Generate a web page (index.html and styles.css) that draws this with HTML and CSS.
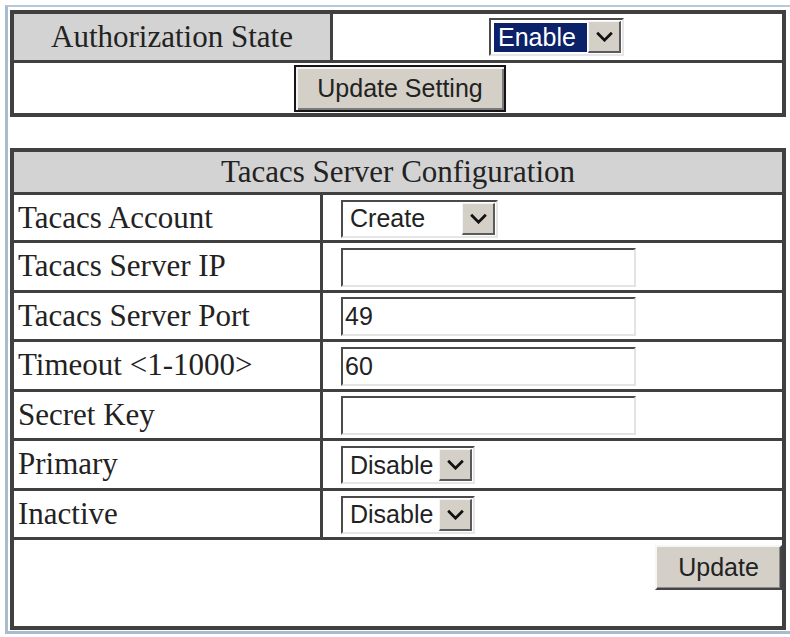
FILE: index.html
```html
<!DOCTYPE html>
<html lang="en">
<head>
<meta charset="utf-8">
<title>Tacacs Server Configuration</title>
<link rel="stylesheet" href="styles.css">
</head>
<body>
<div class="frame">
  <section class="panel auth">
    <div class="auth-row">
      <div class="auth-label">Authorization State</div>
      <div class="auth-value">
        <span class="select select-enable">
          <span class="select-text selected">Enable</span>
          <span class="select-arrow"><svg viewBox="0 0 20 12" width="19" height="11"><path d="M2 2 L10 10 L18 2" fill="none" stroke="#111" stroke-width="3"/></svg></span>
        </span>
      </div>
    </div>
    <div class="auth-action">
      <button class="btn btn-default" type="button">Update Setting</button>
    </div>
  </section>

  <section class="panel tacacs">
    <div class="tac-head">Tacacs Server Configuration</div>
    <div class="tac-row first">
      <div class="tac-label">Tacacs Account</div>
      <div class="tac-value">
        <span class="select select-create">
          <span class="select-text">Create</span>
          <span class="select-arrow"><svg viewBox="0 0 20 12" width="19" height="11"><path d="M2 2 L10 10 L18 2" fill="none" stroke="#111" stroke-width="3"/></svg></span>
        </span>
      </div>
    </div>
    <div class="tac-row">
      <div class="tac-label">Tacacs Server IP</div>
      <div class="tac-value"><span class="field"></span></div>
    </div>
    <div class="tac-row">
      <div class="tac-label">Tacacs Server Port</div>
      <div class="tac-value"><span class="field">49</span></div>
    </div>
    <div class="tac-row">
      <div class="tac-label">Timeout &lt;1-1000&gt;</div>
      <div class="tac-value"><span class="field">60</span></div>
    </div>
    <div class="tac-row">
      <div class="tac-label">Secret Key</div>
      <div class="tac-value"><span class="field"></span></div>
    </div>
    <div class="tac-row">
      <div class="tac-label">Primary</div>
      <div class="tac-value">
        <span class="select select-disable">
          <span class="select-text">Disable</span>
          <span class="select-arrow"><svg viewBox="0 0 20 12" width="19" height="11"><path d="M2 2 L10 10 L18 2" fill="none" stroke="#111" stroke-width="3"/></svg></span>
        </span>
      </div>
    </div>
    <div class="tac-row">
      <div class="tac-label">Inactive</div>
      <div class="tac-value">
        <span class="select select-disable">
          <span class="select-text">Disable</span>
          <span class="select-arrow"><svg viewBox="0 0 20 12" width="19" height="11"><path d="M2 2 L10 10 L18 2" fill="none" stroke="#111" stroke-width="3"/></svg></span>
        </span>
      </div>
    </div>
    <div class="tac-foot">
      <button class="btn btn-update" type="button">Update</button>
    </div>
  </section>
</div>
</body>
</html>
```

FILE: styles.css
```css
* { box-sizing: border-box; }

body {
  margin: 0;
  background: #fff;
  color: #222;
  font-family: "Liberation Serif", "Times New Roman", serif;
}

.frame {
  margin: 5px 0 0 5px;
  border-top: 2px solid #b7c8da;
  border-left: 3px solid #a9bccf;
  border-bottom: 3px solid #a9bccf;
  padding: 3px 0 1px 2px;
}

.panel {
  width: 776px;
  border: 4px solid #404040;
  background: #fff;
}

/* Authorization block */
.auth-row {
  display: flex;
  height: 49px;
  border-bottom: 3px solid #404040;
}

.auth-label {
  width: 319px;
  border-right: 3px solid #404040;
  background: #d3d3d3;
  font-size: 31px;
  display: flex;
  align-items: center;
  justify-content: center;
}

.auth-value {
  flex: 1;
  display: flex;
  align-items: center;
  justify-content: center;
  padding-right: 4px;
}

.auth-action {
  height: 50px;
  display: flex;
  align-items: center;
  justify-content: center;
  padding-left: 4px;
}

/* Tacacs block */
.tacacs {
  margin-top: 31px;
}

.tac-head {
  height: 43px;
  border-bottom: 3px solid #404040;
  background: #d3d3d3;
  font-size: 31px;
  display: flex;
  align-items: center;
  justify-content: center;
}

.tac-row {
  display: flex;
  height: 49.5px;
  border-bottom: 3px solid #404040;
}

.tac-row.first {
  height: 48px;
}

.tac-label {
  width: 309px;
  border-right: 3px solid #404040;
  font-size: 31px;
  display: flex;
  align-items: center;
  padding-left: 4px;
  white-space: nowrap;
}

.tac-value {
  flex: 1;
  display: flex;
  align-items: center;
  padding-left: 18px;
  padding-top: 2px;
}

.tac-foot {
  height: 86px;
  display: flex;
  justify-content: flex-end;
  align-items: flex-start;
  padding-top: 5px;
}

/* Form controls */
.field {
  display: flex;
  align-items: center;
  width: 295px;
  height: 39px;
  border-style: solid;
  border-width: 2px;
  border-color: #4a4a4a #e3e3e3 #e3e3e3 #4a4a4a;
  background: #fff;
  padding-left: 2px;
  font-family: "Liberation Sans", Arial, sans-serif;
  font-size: 25px;
  color: #222;
}

.select {
  display: inline-flex;
  height: 38px;
  border-style: solid;
  border-width: 2px;
  border-color: #4a4a4a #e6e6e6 #e6e6e6 #4a4a4a;
  background: #fff;
  padding: 1px;
  font-family: "Liberation Sans", Arial, sans-serif;
  font-size: 25px;
  color: #222;
}

.select-create { width: 157px; }
.select-disable { width: 134px; }
.select-enable { width: 135px; margin-left: 2px; }

.select-text {
  flex: 1;
  display: flex;
  align-items: center;
  padding-left: 6px;
}

.select-text.selected {
  background: #0b2168;
  color: #fff;
  margin: 2px 1px 1px 2px;
  padding-left: 4px;
}

.select-arrow {
  width: 33px;
  display: flex;
  align-items: center;
  justify-content: center;
  background: #d4d0c8;
  border-style: solid;
  border-width: 1px 2px 2px 1px;
  border-color: #f4f4f4 #5a5a5a #5a5a5a #f4f4f4;
}

.btn {
  font-family: "Liberation Sans", Arial, sans-serif;
  font-size: 25px;
  color: #222;
  background: #d4d0c8;
  padding: 0;
  margin: 0;
  cursor: default;
}

.btn-default {
  width: 212px;
  height: 47px;
  border: 2px solid #151515;
  box-shadow: inset 2px 2px 0 #f2f2f2, inset -2px -2px 0 #7a7a7a;
}

.btn-update {
  width: 127px;
  height: 45px;
  border-style: solid;
  border-width: 2px;
  border-color: #f6f6f6 #454545 #454545 #f6f6f6;
  box-shadow: inset -1px -1px 0 #8a8a8a;
}
```
